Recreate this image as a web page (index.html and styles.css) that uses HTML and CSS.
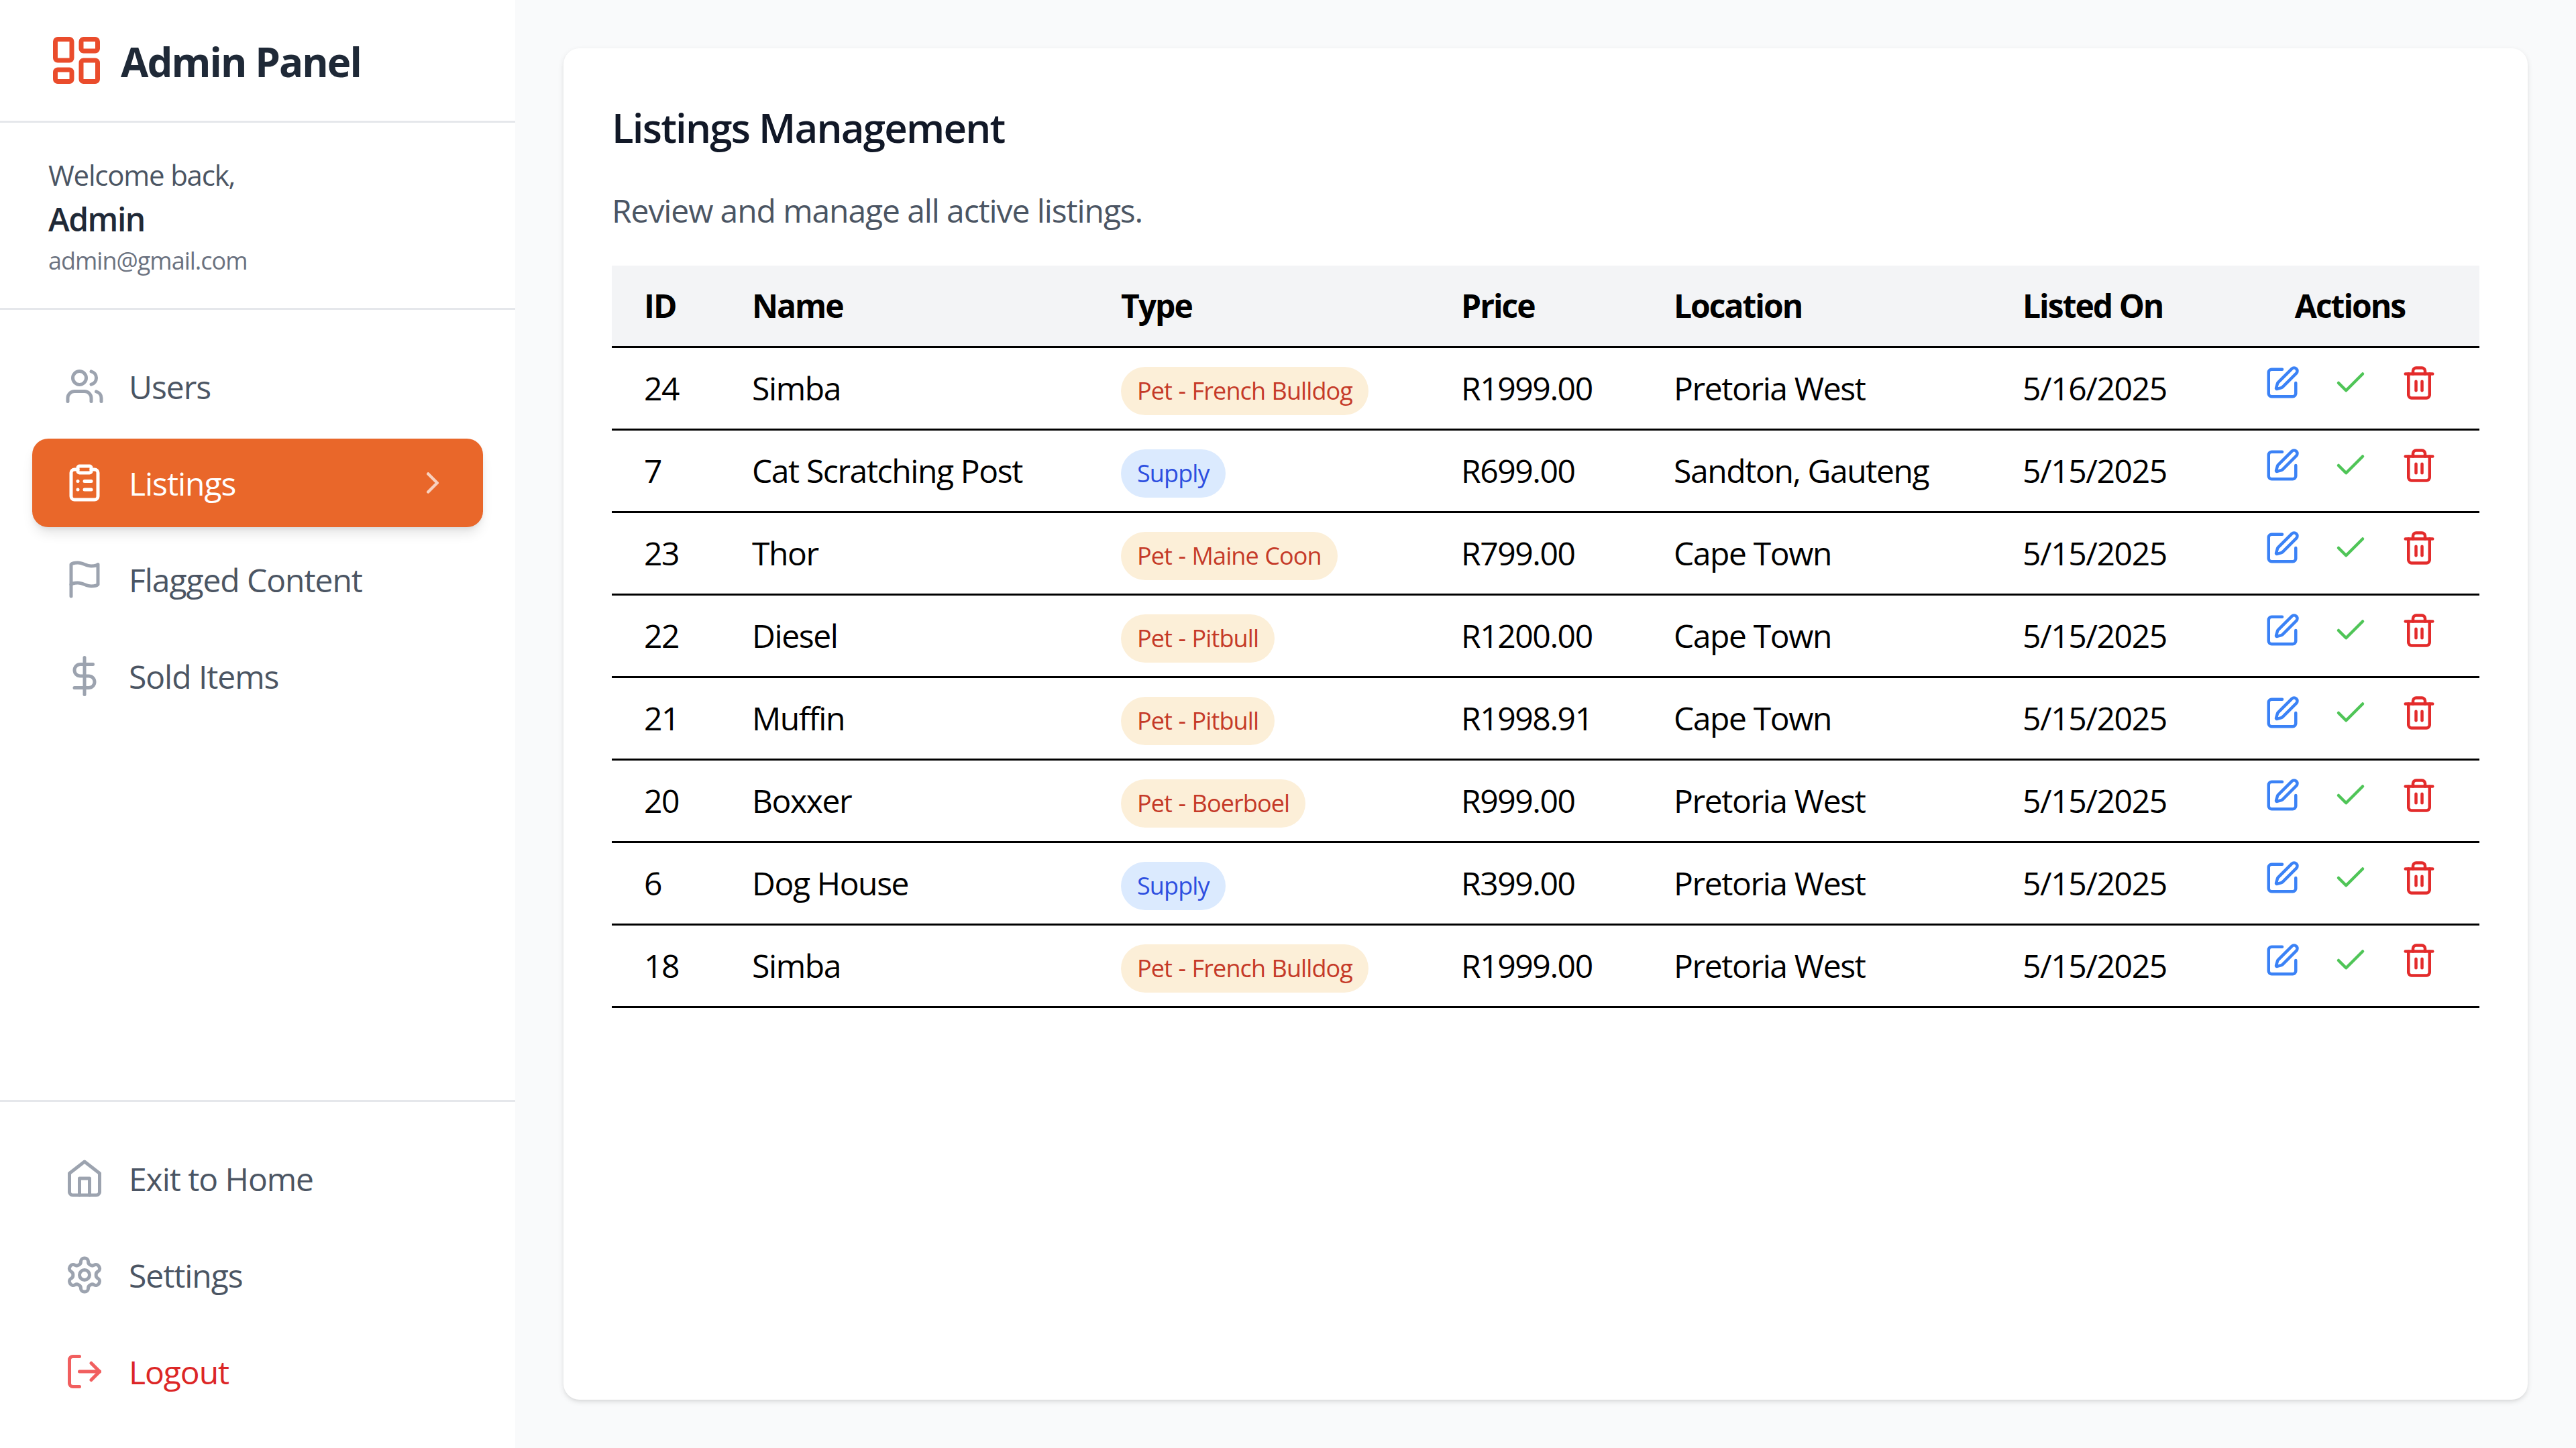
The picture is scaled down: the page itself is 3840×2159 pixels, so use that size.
FILE: index.html
```html
<!DOCTYPE html>
<html lang="en">
<head>
    <meta charset="UTF-8">
    <meta name="viewport" content="width=device-width, initial-scale=1.0">
    <title>Admin Panel - Listings</title>
    <link rel="stylesheet" href="styles.css">
</head>
<body>
    <svg class="icon-defs" xmlns="http://www.w3.org/2000/svg">
        <symbol id="i-logo" viewBox="0 0 24 24"><rect x="3" y="3" width="7" height="9" rx="1"/><rect x="14" y="3" width="7" height="5" rx="1"/><rect x="14" y="12" width="7" height="9" rx="1"/><rect x="3" y="16" width="7" height="5" rx="1"/></symbol>
        <symbol id="i-users" viewBox="0 0 24 24"><path d="M16 21v-2a4 4 0 0 0-4-4H6a4 4 0 0 0-4 4v2"/><circle cx="9" cy="7" r="4"/><path d="M22 21v-2a4 4 0 0 0-3-3.87"/><path d="M16 3.13a4 4 0 0 1 0 7.75"/></symbol>
        <symbol id="i-clipboard" viewBox="0 0 24 24"><rect x="8" y="2" width="8" height="4" rx="1"/><path d="M16 4h2a2 2 0 0 1 2 2v14a2 2 0 0 1-2 2H6a2 2 0 0 1-2-2V6a2 2 0 0 1 2-2h2"/><path d="M12 11h4"/><path d="M12 16h4"/><path d="M8 11h.01"/><path d="M8 16h.01"/></symbol>
        <symbol id="i-chevron" viewBox="0 0 24 24"><path d="m9 18 6-6-6-6"/></symbol>
        <symbol id="i-flag" viewBox="0 0 24 24"><path d="M4 15s1-1 4-1 5 2 8 2 4-1 4-1V3s-1 1-4 1-5-2-8-2-4 1-4 1z"/><path d="M4 22v-7"/></symbol>
        <symbol id="i-dollar" viewBox="0 0 24 24"><path d="M12 1v22"/><path d="M17 5H9.5a3.5 3.5 0 0 0 0 7h5a3.5 3.5 0 0 1 0 7H6"/></symbol>
        <symbol id="i-home" viewBox="0 0 24 24"><path d="m3 9 9-7 9 7v11a2 2 0 0 1-2 2H5a2 2 0 0 1-2-2z"/><path d="M9 22V12h6v10"/></symbol>
        <symbol id="i-settings" viewBox="0 0 24 24"><path d="M12.22 2h-.44a2 2 0 0 0-2 2v.18a2 2 0 0 1-1 1.73l-.43.25a2 2 0 0 1-2 0l-.15-.08a2 2 0 0 0-2.73.73l-.22.38a2 2 0 0 0 .73 2.73l.15.1a2 2 0 0 1 1 1.72v.51a2 2 0 0 1-1 1.74l-.15.09a2 2 0 0 0-.73 2.73l.22.38a2 2 0 0 0 2.73.73l.15-.08a2 2 0 0 1 2 0l.43.25a2 2 0 0 1 1 1.73V20a2 2 0 0 0 2 2h.44a2 2 0 0 0 2-2v-.18a2 2 0 0 1 1-1.73l.43-.25a2 2 0 0 1 2 0l.15.08a2 2 0 0 0 2.73-.73l.22-.39a2 2 0 0 0-.73-2.73l-.15-.08a2 2 0 0 1-1-1.74v-.5a2 2 0 0 1 1-1.74l.15-.09a2 2 0 0 0 .73-2.73l-.22-.38a2 2 0 0 0-2.73-.73l-.15.08a2 2 0 0 1-2 0l-.43-.25a2 2 0 0 1-1-1.73V4a2 2 0 0 0-2-2z"/><circle cx="12" cy="12" r="3"/></symbol>
        <symbol id="i-logout" viewBox="0 0 24 24"><path d="M9 21H5a2 2 0 0 1-2-2V5a2 2 0 0 1 2-2h4"/><path d="m16 17 5-5-5-5"/><path d="M21 12H9"/></symbol>
        <symbol id="i-edit" viewBox="0 0 24 24"><path d="M12 3H5a2 2 0 0 0-2 2v14a2 2 0 0 0 2 2h14a2 2 0 0 0 2-2v-7"/><path d="M18.375 2.625a1 1 0 0 1 3 3l-9.013 9.014a2 2 0 0 1-.853.505l-2.873.84a.5.5 0 0 1-.62-.62l.84-2.873a2 2 0 0 1 .506-.852z"/></symbol>
        <symbol id="i-check" viewBox="0 0 24 24"><path d="M20 6 9 17l-5-5"/></symbol>
        <symbol id="i-trash" viewBox="0 0 24 24"><path d="M3 6h18"/><path d="M19 6v14c0 1-1 2-2 2H7c-1 0-2-1-2-2V6"/><path d="M8 6V4c0-1 1-2 2-2h4c1 0 2 1 2 2v2"/><path d="M10 11v6"/><path d="M14 11v6"/></symbol>
    </svg>

    <div class="layout">
        <aside class="sidebar">
            <div class="brand">
                <svg class="brand-icon"><use href="#i-logo"/></svg>
                <span class="brand-name">Admin Panel</span>
            </div>
            <div class="profile">
                <p class="welcome">Welcome back,</p>
                <p class="profile-name">Admin</p>
                <p class="profile-email">admin@gmail.com</p>
            </div>
            <nav class="nav">
                <a class="nav-item"><svg class="nav-icon"><use href="#i-users"/></svg>Users</a>
                <a class="nav-item active"><svg class="nav-icon"><use href="#i-clipboard"/></svg>Listings<svg class="nav-chevron"><use href="#i-chevron"/></svg></a>
                <a class="nav-item"><svg class="nav-icon"><use href="#i-flag"/></svg>Flagged Content</a>
                <a class="nav-item"><svg class="nav-icon"><use href="#i-dollar"/></svg>Sold Items</a>
            </nav>
            <nav class="nav nav-bottom">
                <a class="nav-item"><svg class="nav-icon"><use href="#i-home"/></svg>Exit to Home</a>
                <a class="nav-item"><svg class="nav-icon"><use href="#i-settings"/></svg>Settings</a>
                <a class="nav-item logout"><svg class="nav-icon"><use href="#i-logout"/></svg>Logout</a>
            </nav>
        </aside>

        <main class="main">
            <section class="card">
                <h1>Listings Management</h1>
                <p class="subtitle">Review and manage all active listings.</p>
                <table class="listings">
                    <colgroup>
                        <col class="col-id"><col class="col-name"><col class="col-type"><col class="col-price"><col class="col-location"><col class="col-date"><col>
                    </colgroup>
                    <thead>
                        <tr><th>ID</th><th>Name</th><th>Type</th><th>Price</th><th>Location</th><th>Listed On</th><th class="th-actions">Actions</th></tr>
                    </thead>
                    <tbody>
                        <tr><td>24</td><td>Simba</td><td><span class="badge pet">Pet - French Bulldog</span></td><td>R1999.00</td><td>Pretoria West</td><td>5/16/2025</td><td class="actions"><div class="action-btns"><svg class="a-edit"><use href="#i-edit"/></svg><svg class="a-check"><use href="#i-check"/></svg><svg class="a-trash"><use href="#i-trash"/></svg></div></td></tr>
                        <tr><td>7</td><td>Cat Scratching Post</td><td><span class="badge supply">Supply</span></td><td>R699.00</td><td>Sandton, Gauteng</td><td>5/15/2025</td><td class="actions"><div class="action-btns"><svg class="a-edit"><use href="#i-edit"/></svg><svg class="a-check"><use href="#i-check"/></svg><svg class="a-trash"><use href="#i-trash"/></svg></div></td></tr>
                        <tr><td>23</td><td>Thor</td><td><span class="badge pet">Pet - Maine Coon</span></td><td>R799.00</td><td>Cape Town</td><td>5/15/2025</td><td class="actions"><div class="action-btns"><svg class="a-edit"><use href="#i-edit"/></svg><svg class="a-check"><use href="#i-check"/></svg><svg class="a-trash"><use href="#i-trash"/></svg></div></td></tr>
                        <tr><td>22</td><td>Diesel</td><td><span class="badge pet">Pet - Pitbull</span></td><td>R1200.00</td><td>Cape Town</td><td>5/15/2025</td><td class="actions"><div class="action-btns"><svg class="a-edit"><use href="#i-edit"/></svg><svg class="a-check"><use href="#i-check"/></svg><svg class="a-trash"><use href="#i-trash"/></svg></div></td></tr>
                        <tr><td>21</td><td>Muffin</td><td><span class="badge pet">Pet - Pitbull</span></td><td>R1998.91</td><td>Cape Town</td><td>5/15/2025</td><td class="actions"><div class="action-btns"><svg class="a-edit"><use href="#i-edit"/></svg><svg class="a-check"><use href="#i-check"/></svg><svg class="a-trash"><use href="#i-trash"/></svg></div></td></tr>
                        <tr><td>20</td><td>Boxxer</td><td><span class="badge pet">Pet - Boerboel</span></td><td>R999.00</td><td>Pretoria West</td><td>5/15/2025</td><td class="actions"><div class="action-btns"><svg class="a-edit"><use href="#i-edit"/></svg><svg class="a-check"><use href="#i-check"/></svg><svg class="a-trash"><use href="#i-trash"/></svg></div></td></tr>
                        <tr><td>6</td><td>Dog House</td><td><span class="badge supply">Supply</span></td><td>R399.00</td><td>Pretoria West</td><td>5/15/2025</td><td class="actions"><div class="action-btns"><svg class="a-edit"><use href="#i-edit"/></svg><svg class="a-check"><use href="#i-check"/></svg><svg class="a-trash"><use href="#i-trash"/></svg></div></td></tr>
                        <tr><td>18</td><td>Simba</td><td><span class="badge pet">Pet - French Bulldog</span></td><td>R1999.00</td><td>Pretoria West</td><td>5/15/2025</td><td class="actions"><div class="action-btns"><svg class="a-edit"><use href="#i-edit"/></svg><svg class="a-check"><use href="#i-check"/></svg><svg class="a-trash"><use href="#i-trash"/></svg></div></td></tr>
                    </tbody>
                </table>
            </section>
        </main>
    </div>
</body>
</html>
```

FILE: styles.css
```css
* {
    box-sizing: border-box;
}

body {
    margin: 0;
    font-family: "Open Sans", "Noto Sans", sans-serif;
    font-size: 48px;
    background: #f9fafb;
    color: #000;
}

p, h1 {
    margin: 0;
}

.icon-defs {
    display: none;
}

svg {
    fill: none;
    stroke: currentColor;
    stroke-width: 2;
    stroke-linecap: round;
    stroke-linejoin: round;
    flex-shrink: 0;
}

.layout {
    display: flex;
    height: 2159px;
}

/* sidebar */
.sidebar {
    width: 768px;
    flex-shrink: 0;
    display: flex;
    flex-direction: column;
    background: #fff;
}

.brand {
    height: 183px;
    display: flex;
    align-items: center;
    gap: 24px;
    padding: 0 72px;
    border-bottom: 3px solid #e5e7eb;
}

.brand-icon {
    width: 84px;
    height: 84px;
    color: #ea4c2c;
}

.brand-name {
    margin-top: 3px;
    font-size: 60px;
    font-weight: 700;
    color: #1f2937;
    letter-spacing: -1.9px;
}

.profile {
    height: 279px;
    padding: 48px 72px;
    border-bottom: 3px solid #e5e7eb;
}

.welcome {
    font-size: 42px;
    line-height: 60px;
    color: #4b5563;
    letter-spacing: -1.2px;
}

.profile-name {
    font-size: 48px;
    line-height: 72px;
    font-weight: 600;
    color: #1f2937;
    letter-spacing: -1.5px;
}

.profile-email {
    margin-top: 2px;
    font-size: 36px;
    line-height: 48px;
    color: #6b7280;
    letter-spacing: -1px;
}

.nav {
    display: flex;
    flex-direction: column;
    gap: 12px;
    padding: 48px;
}

.nav-bottom {
    margin-top: auto;
    border-top: 3px solid #e5e7eb;
}

.nav-item {
    height: 132px;
    display: flex;
    align-items: center;
    gap: 36px;
    padding: 0 48px;
    border-radius: 24px;
    color: #4b5563;
    letter-spacing: -1.05px;
}

.nav-icon {
    width: 60px;
    height: 60px;
    color: #9ca3af;
}

.nav-item.active {
    background: #e9672a;
    color: #fff;
    box-shadow: 0 12px 18px -3px rgba(0, 0, 0, 0.1), 0 4px 9px -3px rgba(0, 0, 0, 0.1);
}

.nav-item.active .nav-icon {
    color: #fff;
}

.nav-chevron {
    width: 54px;
    height: 54px;
    margin-left: auto;
    opacity: 0.7;
}

.logout {
    color: #dc2626;
}

.logout .nav-icon {
    color: #ef4444;
    opacity: 0.85;
}

/* main area */
.main {
    flex: 1;
    padding: 72px;
    min-width: 0;
}

.card {
    height: 100%;
    padding: 72px;
    background: #fff;
    border-radius: 24px;
    box-shadow: 0 3px 9px rgba(0, 0, 0, 0.1), 0 3px 6px -3px rgba(0, 0, 0, 0.1);
}

h1 {
    font-size: 60px;
    line-height: 92px;
    font-weight: 600;
    color: #111827;
    letter-spacing: -1.8px;
}

.subtitle {
    margin-top: 42px;
    line-height: 72px;
    color: #4b5563;
    letter-spacing: -1.1px;
}

.listings {
    width: 100%;
    margin-top: 46px;
    border-collapse: collapse;
    table-layout: fixed;
    letter-spacing: -1.4px;
}

.col-id { width: 161px; }
.col-name { width: 550px; }
.col-type { width: 507px; }
.col-price { width: 317px; }
.col-location { width: 520px; }
.col-date { width: 343px; }

th {
    height: 121px;
    padding: 0 48px;
    text-align: left;
    font-weight: 700;
    letter-spacing: -2px;
    background: #f3f4f6;
    border-bottom: 3px solid #000;
}

td {
    height: 123px;
    padding: 0 48px;
    border-bottom: 3px solid #000;
    white-space: nowrap;
}

.th-actions {
    text-align: center;
}

.badge {
    display: inline-block;
    height: 72px;
    margin-top: 8px;
    padding: 0 24px;
    border-radius: 36px;
    font-size: 36px;
    line-height: 72px;
    letter-spacing: -0.9px;
    word-spacing: 1px;
    vertical-align: middle;
}

.pet {
    background: #fcefd8;
    color: #c53a28;
}

.supply {
    background: #dbeafe;
    color: #2d4fe0;
}

.actions {
    padding: 25px 0 0 2px;
    vertical-align: top;
}

.action-btns {
    display: flex;
    justify-content: center;
    gap: 48px;
}

.action-btns svg {
    width: 54px;
    height: 54px;
}

.a-edit { color: #3b82f6; }
.a-check { color: #4fc557; }
.a-trash { color: #e32b2b; }
```
